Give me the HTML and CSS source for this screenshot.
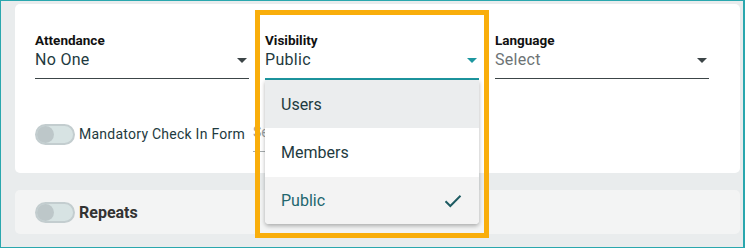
FILE: index.html
```html
<!DOCTYPE html>
<html lang="en">
<head>
    <meta charset="UTF-8">
    <title>Event Settings</title>
    <link rel="stylesheet" href="styles.css">
</head>
<body>
    <div class="frame">
        <div class="card">
            <div class="fields">
                <div class="field">
                    <label>Attendance</label>
                    <div class="select">
                        <span class="value">No One</span>
                        <span class="arrow"></span>
                    </div>
                </div>
                <div class="field active">
                    <label>Visibility</label>
                    <div class="select">
                        <span class="value">Public</span>
                        <span class="arrow"></span>
                    </div>
                </div>
                <div class="field">
                    <label>Language</label>
                    <div class="select">
                        <span class="value placeholder">Select</span>
                        <span class="arrow"></span>
                    </div>
                </div>
            </div>
            <div class="toggle-row">
                <span class="toggle"><span class="knob"></span></span>
                <span class="toggle-label">Mandatory Check In Form</span>
                <div class="form-select">Select</div>
            </div>
        </div>

        <div class="card card-muted">
            <div class="toggle-row">
                <span class="toggle"><span class="knob"></span></span>
                <span class="toggle-label strong">Repeats</span>
            </div>
        </div>

        <ul class="menu">
            <li>Users</li>
            <li class="plain">Members</li>
            <li class="selected">Public
                <svg width="18" height="14" viewBox="0 0 18 14"><path d="M1.5 7.2 L6.3 12 L16.5 1.8" fill="none" stroke="#1f5c63" stroke-width="2"/></svg>
            </li>
        </ul>
        <div class="highlight"></div>
    </div>
</body>
</html>
```

FILE: styles.css
```css
* {
    box-sizing: border-box;
    font-family: 'Roboto', 'Liberation Sans', sans-serif;
}

body {
    margin: 0;
}

.frame {
    position: relative;
    width: 745px;
    height: 248px;
    border: 1px solid #2aa7ae;
    border-right-width: 2px;
    background-color: #e9eced;
    padding: 3px 3px 0 14px;
}

.card {
    background-color: #fff;
    border-radius: 5px;
    height: 169px;
    padding: 28px 20px 0 20px;
}

.card-muted {
    background-color: #f3f4f4;
    height: 44px;
    margin-top: 17px;
    padding: 0 20px;
    display: flex;
    align-items: center;
}

.fields {
    display: flex;
    gap: 16px;
}

.field {
    width: 214px;
}

.field label {
    display: block;
    font-size: 13.5px;
    font-weight: bold;
    color: #111;
    line-height: 16px;
}

.select {
    display: flex;
    align-items: center;
    justify-content: space-between;
    height: 31px;
    padding-bottom: 7px;
    border-bottom: 1px solid #3c4547;
}

.field.active .select {
    border-bottom: 2px solid #1d97a0;
    height: 32px;
}

.value {
    font-size: 16px;
    color: #1e3a40;
    letter-spacing: 0.3px;
}

.value.placeholder {
    color: #6d7375;
}

.arrow {
    width: 0;
    height: 0;
    margin-right: 2px;
    margin-top: 2px;
    border-left: 5px solid transparent;
    border-right: 5px solid transparent;
    border-top: 5px solid #3c4547;
}

.field.active .arrow {
    border-top-color: #1d97a0;
}

.toggle-row {
    display: flex;
    align-items: center;
    gap: 4px;
    height: 36px;
    margin-top: 36px;
}

.card-muted .toggle-row {
    margin-top: 0;
}

.toggle {
    display: flex;
    align-items: center;
    width: 40px;
    height: 21px;
    border-radius: 11px;
    background-color: #d7e3e3;
    border: 2px solid #c3cdcf;
}

.knob {
    width: 17px;
    height: 17px;
    border-radius: 50%;
    background-color: #bdc7c9;
}

.toggle-label {
    font-size: 14px;
    letter-spacing: 0.25px;
    color: #1e3a40;
}

.toggle-label.strong {
    font-size: 16px;
    letter-spacing: 0;
    font-weight: bold;
    color: #333;
}

.form-select {
    margin-left: 4px;
    width: 200px;
    height: 36px;
    padding-top: 8px;
    font-size: 14px;
    color: #9aa0a2;
    border-bottom: 1px solid #a6acae;
}

.menu {
    position: absolute;
    left: 264px;
    top: 79px;
    width: 214px;
    margin: 0;
    padding: 0;
    list-style: none;
    background-color: #fff;
    border-radius: 0 0 4px 4px;
    box-shadow: 0 2px 4px rgba(0, 0, 0, 0.3);
    overflow: hidden;
}

.menu li {
    display: flex;
    align-items: center;
    justify-content: space-between;
    height: 48px;
    padding: 0 17px 0 16px;
    font-size: 16px;
    color: #1e3a40;
    background-color: #ebedee;
}

.menu li.plain {
    background-color: #fff;
    height: 49px;
}

.menu li.selected {
    background-color: #f3f3f3;
    color: #22666e;
    height: 47px;
}

.highlight {
    position: absolute;
    left: 254px;
    top: 9px;
    width: 234px;
    height: 228px;
    border: 5px solid #f9ae0b;
}
```
